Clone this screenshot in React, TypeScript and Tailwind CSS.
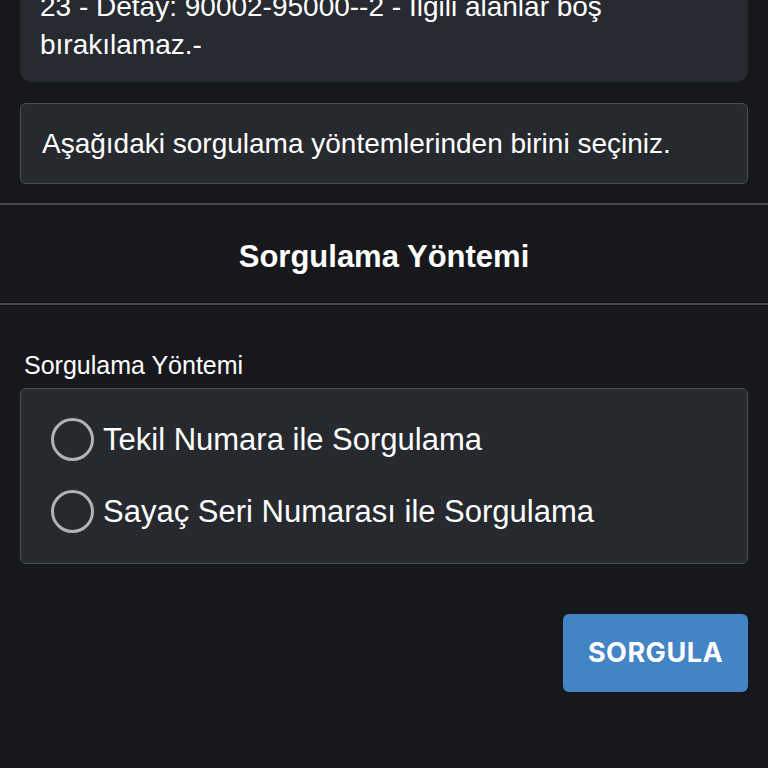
import { useState } from 'react';

const options = ['Tekil Numara ile Sorgulama', 'Sayaç Seri Numarası ile Sorgulama'];

function Radio({ label, checked, onSelect }: { label: string; checked: boolean; onSelect: () => void }) {
  return (
    <button type="button" onClick={onSelect} className="flex items-center gap-[9px] text-left">
      <span className="flex h-[43px] w-[43px] shrink-0 items-center justify-center rounded-full border-[3px] border-[#b3b3b5]">
        {checked && <span className="h-[21px] w-[21px] rounded-full bg-[#b3b3b5]" />}
      </span>
      <span className="text-[31px] leading-[36px] text-white">{label}</span>
    </button>
  );
}

export default function App() {
  const [method, setMethod] = useState<number | null>(null);

  return (
    <div className="min-h-screen overflow-hidden bg-[#17181c] font-['Liberation_Sans',Arial,sans-serif] text-white">
      <div className="px-5">
        <div className="-mt-[12px] rounded-b-[12px] bg-[#272a30] px-5 pb-[18px] text-[28px] leading-[38px]">
          <p>23 - Detay: 90002-95000--2 - İlgili alanlar boş bırakılamaz.-</p>
        </div>

        <div className="mt-[21px] rounded-[6px] border border-[#4b4e54] bg-[#26292e] px-[21px] py-[22px] text-[28px] leading-[35px]">
          Aşağıdaki sorgulama yöntemlerinden birini seçiniz.
        </div>
      </div>

      <div className="mt-[19px] border-y-2 border-[#46474b] pb-[28px] pt-[34px] text-center text-[31px] font-bold leading-[36px]">
        Sorgulama Yöntemi
      </div>

      <div className="px-5 pt-[45px]">
        <label className="block pl-1 text-[25px] leading-[30px]">Sorgulama Yöntemi</label>
        <div className="mt-[8px] flex flex-col gap-[29px] rounded-[6px] border border-[#4b4e54] bg-[#26292e] px-[30px] pb-[30px] pt-[29px]">
          {options.map((o, i) => (
            <Radio key={o} label={o} checked={method === i} onSelect={() => setMethod(i)} />
          ))}
        </div>

        <div className="mt-[50px] flex justify-end">
          <button
            type="button"
            className="h-[78px] w-[185px] rounded-[6px] bg-[#4384c5] font-['Inter',sans-serif] text-[27px] font-bold tracking-[0.5px] text-white"
          >
            SORGULA
          </button>
        </div>
      </div>
    </div>
  );
}
